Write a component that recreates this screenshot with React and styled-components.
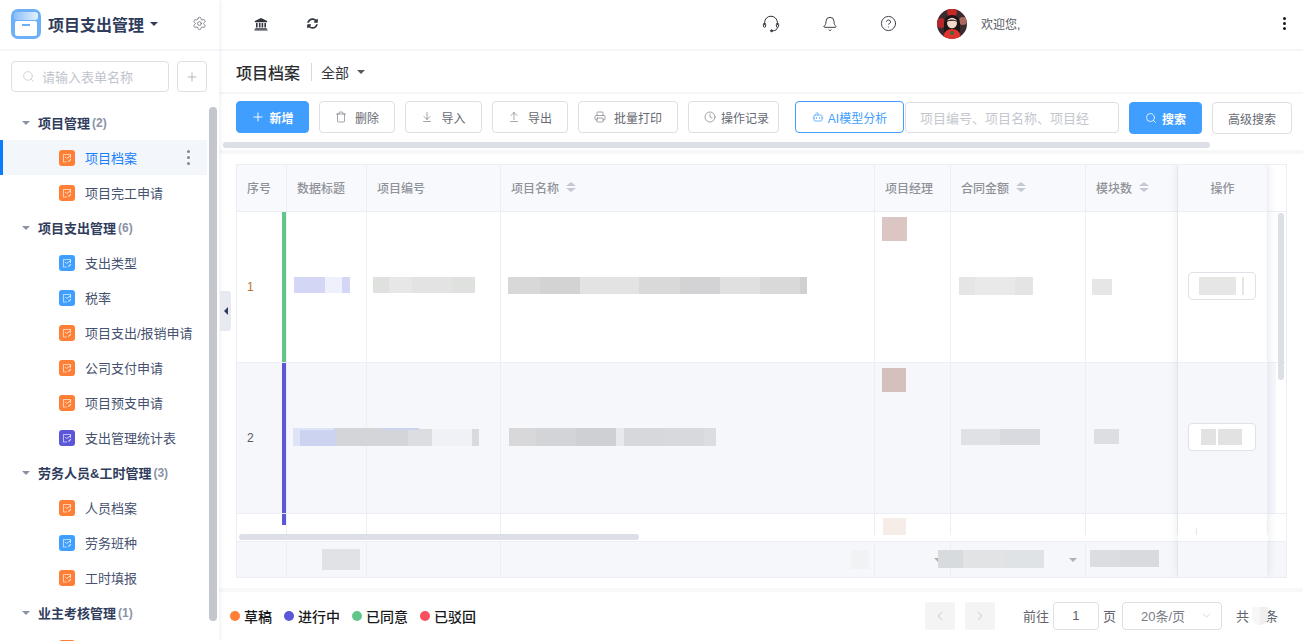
import React from 'react';
import styled, { createGlobalStyle } from 'styled-components';
import {
  ArrowDownToLine,
  ArrowUpFromLine,
  Bell,
  Bot,
  ChevronDown,
  ChevronLeft,
  ChevronRight,
  CircleHelp,
  Clock,
  Plus,
  Printer,
  Search,
  Settings,
  Trash,
} from 'lucide-react';
import { FaSyncAlt } from 'react-icons/fa';

const ORANGE = '#ff7f36';
const BLUE = '#409eff';
const PURPLE = '#5b57d8';
const GREEN = '#62c68a';
const RED = '#f9505d';
const LINE = '#ebeef5';
const STRIPE = '#f5f7fb';

const groups = [
  {
    name: '项目管理',
    count: 2,
    items: [
      { name: '项目档案', color: ORANGE, active: true },
      { name: '项目完工申请', color: ORANGE },
    ],
  },
  {
    name: '项目支出管理',
    count: 6,
    items: [
      { name: '支出类型', color: BLUE },
      { name: '税率', color: BLUE },
      { name: '项目支出/报销申请', color: ORANGE },
      { name: '公司支付申请', color: ORANGE },
      { name: '项目预支申请', color: ORANGE },
      { name: '支出管理统计表', color: PURPLE },
    ],
  },
  {
    name: '劳务人员&工时管理',
    count: 3,
    items: [
      { name: '人员档案', color: ORANGE },
      { name: '劳务班种', color: BLUE },
      { name: '工时填报', color: ORANGE },
    ],
  },
  {
    name: '业主考核管理',
    count: 1,
    // only the top of this icon is on screen, its label is below the fold
    items: [{ name: '', color: ORANGE }],
  },
];

const GlobalStyle = createGlobalStyle`
  html, body {
    margin: 0;
    padding: 0;
    background: #fff;
  }
  body {
    font-family: "Liberation Sans", "Noto Sans CJK SC", sans-serif;
    overflow: hidden;
  }
  * {
    box-sizing: border-box;
  }
`;

const Page = styled.div`
  display: flex;
  width: 1303px;
  height: 641px;
  overflow: hidden;
  position: relative;
`;

const Sidebar = styled.aside`
  position: relative;
  z-index: 3;
  width: 219px;
  flex: none;
  height: 100%;
  background: #fff;
  box-shadow: 2px 0 4px rgba(40, 50, 80, 0.06);
  display: flex;
  flex-direction: column;
  overflow: hidden;
`;

const BrandBar = styled.div`
  height: 51px;
  flex: none;
  border-bottom: 2px solid #f5f6fa;
  display: flex;
  align-items: center;
  padding: 0 12px 2px 11px;
`;

const BrandTitle = styled.div`
  margin-left: 7px;
  font-size: 16px;
  font-weight: 700;
  color: #2f3c5c;
  white-space: nowrap;
`;

const Caret = styled.i`
  display: inline-block;
  flex: none;
  width: 0;
  height: 0;
  border-left: ${(p) => p.$size || 4}px solid transparent;
  border-right: ${(p) => p.$size || 4}px solid transparent;
  border-top: ${(p) => p.$size || 4}px solid ${(p) => p.$color || '#2f3c5c'};
  margin-left: ${(p) => p.$left || 0}px;
`;

const GearSlot = styled.span`
  margin-left: auto;
  display: flex;
  color: #5f646e;
`;

const SearchRow = styled.div`
  flex: none;
  display: flex;
  gap: 8px;
  padding: 10px 12px 13px 11px;
`;

const FormSearch = styled.div`
  width: 158px;
  height: 31px;
  border: 1px solid #dcdfe6;
  border-radius: 4px;
  display: flex;
  align-items: center;
  gap: 7px;
  padding-left: 10px;
  font-size: 13px;
  color: #c0c4cc;
`;

const SquareButton = styled.div`
  width: 30px;
  height: 31px;
  border: 1px solid #dcdfe6;
  border-radius: 4px;
  display: flex;
  align-items: center;
  justify-content: center;
  color: #9a9ea6;
`;

const MenuList = styled.div`
  flex: 1;
  min-height: 0;
  overflow: hidden;
`;

const GroupRow = styled.div`
  height: 35px;
  width: 207px;
  display: flex;
  align-items: center;
  padding-left: 22px;
  font-size: 13px;
  font-weight: 700;
  color: #2f3c5c;
  white-space: nowrap;
`;

const GroupName = styled.span`
  margin-left: 8px;
`;

const GroupCount = styled.span`
  margin-left: 2px;
  font-size: 12px;
  color: #8b93a7;
`;

const MenuItem = styled.div`
  height: 35px;
  width: 207px;
  display: flex;
  align-items: center;
  padding-left: ${(p) => (p.$active ? 56 : 59)}px;
  font-size: 13px;
  white-space: nowrap;
  color: ${(p) => (p.$active ? '#1a7ffb' : '#46526f')};
  background: ${(p) => (p.$active ? '#f3f6fb' : 'transparent')};
  border-left: ${(p) => (p.$active ? '3px solid #0b7cfb' : 'none')};
`;

const MenuIconBox = styled.span`
  width: 16px;
  height: 16px;
  flex: none;
  border-radius: 3px;
  background: ${(p) => p.$color};
  margin-right: 10px;
  display: flex;
`;

const Kebab = styled.span`
  display: flex;
  flex-direction: column;
  gap: ${(p) => p.$gap}px;
  margin-left: auto;
  margin-right: ${(p) => p.$right}px;

  i {
    display: block;
    width: 3px;
    height: 3px;
    border-radius: 50%;
    background: ${(p) => p.$color};
  }
`;

const SideThumb = styled.div`
  position: absolute;
  left: 209px;
  top: 107px;
  width: 8px;
  height: 514px;
  border-radius: 4px;
  background: #c3c6cc;
`;

const CollapseHandle = styled.div`
  position: absolute;
  z-index: 4;
  left: 220px;
  top: 291px;
  width: 11px;
  height: 40px;
  border-radius: 0 3px 3px 0;
  background: #e8eaf1;
  display: flex;
  align-items: center;
  justify-content: center;
`;

const HandleArrow = styled.i`
  width: 0;
  height: 0;
  border-top: 4px solid transparent;
  border-bottom: 4px solid transparent;
  border-right: 4px solid #2f3c5c;
`;

const Main = styled.main`
  flex: 1;
  min-width: 0;
  display: flex;
  flex-direction: column;
`;

const TopBar = styled.header`
  height: 51px;
  flex: none;
  border-bottom: 2px solid #f5f6fa;
  display: flex;
  align-items: center;
  padding: 0 17px 2px 35px;
`;

const TopIcon = styled.span`
  display: flex;
  align-items: center;
  justify-content: center;
  color: #30343c;
`;

const TopLeft = styled.div`
  display: flex;
  align-items: center;
  gap: 39px;
`;

const TopRight = styled.div`
  margin-left: 444px;
  display: flex;
  align-items: center;
  gap: 42px;
`;

const UserBox = styled.div`
  display: flex;
  align-items: center;
  gap: 14px;
  margin-left: -2px;
  font-size: 12px;
  color: #555a63;
`;

const TitleRow = styled.div`
  height: 43px;
  flex: none;
  border-bottom: 2px solid #f5f6fa;
  display: flex;
  align-items: center;
  padding-left: 17px;
`;

const PageTitle = styled.h1`
  margin: 0;
  font-size: 16px;
  font-weight: 500;
  color: #2b2d31;
`;

const TitleDivider = styled.span`
  width: 1px;
  height: 18px;
  background: #d6d9e0;
  margin: 0 9px 0 11px;
`;

const FilterLabel = styled.span`
  font-size: 14px;
  color: #34373d;
  margin-right: 8px;
`;

const Toolbar = styled.div`
  height: 48px;
  flex: none;
  display: flex;
  align-items: flex-start;
  padding: 7px 0 0 17px;
`;

const ToolButton = styled.button`
  flex: none;
  width: ${(p) => p.$w}px;
  height: 32px;
  margin: ${(p) => (p.$low ? '1px' : '0')} ${(p) => p.$gap ?? 10}px 0 0;
  padding: 0 0 0 ${(p) => p.$shift || 0}px;
  border-radius: 4px;
  border: 1px solid ${(p) => (p.$primary || p.$accent ? BLUE : '#dcdfe6')};
  background: ${(p) => (p.$primary ? BLUE : '#fff')};
  color: ${(p) => (p.$primary ? '#fff' : p.$accent ? BLUE : '#666a72')};
  font: inherit;
  font-size: 12px;
  font-weight: ${(p) => (p.$primary ? 700 : 400)};
  display: flex;
  align-items: center;
  justify-content: center;
  gap: ${(p) => p.$space ?? 8}px;
  white-space: nowrap;
`;

const KeywordInput = styled.div`
  flex: none;
  width: 214px;
  height: 31px;
  margin: 1px 10px 0 1px;
  border: 1px solid #dcdfe6;
  border-radius: 4px;
  display: flex;
  align-items: center;
  padding-left: 14px;
  font-size: 13px;
  color: #c4c7ce;
  white-space: nowrap;
  overflow: hidden;
`;

const ToolbarTrack = styled.div`
  flex: none;
  height: 8px;
  padding-left: 4px;
`;

const ToolbarThumb = styled.div`
  width: 987px;
  height: 6px;
  border-radius: 3px;
  background: #dcdfe6;
`;

const Band = styled.div`
  flex: none;
  height: 4px;
  background: #f7f8fa;
`;

const TableArea = styled.section`
  flex: none;
  padding: 10px 0 10px 17px;
`;

const Table = styled.div`
  position: relative;
  width: 1051px;
  height: 414px;
  border: 1px solid ${LINE};
  display: flex;
  flex-direction: column;
  overflow: hidden;
`;

const Row = styled.div`
  flex: none;
  display: grid;
  grid-template-columns: 50px 80px 134px 374px 76px 135px 92px 90px 18px;
  height: ${(p) => p.$h}px;
  background: ${(p) => p.$bg || '#fff'};
  border-bottom: ${(p) => (p.$line ? `1px solid ${LINE}` : 'none')};
  border-top: ${(p) => (p.$top ? `1px solid ${LINE}` : 'none')};
`;

const Cell = styled.div`
  min-width: 0;
  display: flex;
  align-items: center;
  padding-left: ${(p) => p.$pad || 0}px;
  border-right: 1px solid ${LINE};
  background: ${(p) => p.$bg || 'transparent'};
  position: relative;
`;

const HeadCell = styled(Cell)`
  justify-content: ${(p) => (p.$center ? 'center' : 'flex-start')};
  padding-left: ${(p) => (p.$center ? 0 : 10)}px;
  padding-bottom: 2px;
  font-size: 12px;
  font-weight: 500;
  color: #8f9299;
  white-space: nowrap;
`;

const Sort = styled.span`
  display: flex;
  flex-direction: column;
  gap: 2px;
  margin-left: 7px;

  i {
    width: 0;
    height: 0;
    border-left: 5px solid transparent;
    border-right: 5px solid transparent;
  }
  i:first-child {
    border-bottom: 4px solid #c4c8d3;
  }
  i:last-child {
    border-top: 4px solid #c4c8d3;
  }
`;

const GutterCell = styled.div`
  background: ${(p) => (p.$stripe ? `linear-gradient(90deg, ${STRIPE} 8px, #fff 8px)` : '#fff')};
`;

const RowNumber = styled.span`
  font-size: 12px;
  color: ${(p) => p.$color};
  flex: 1;
`;

const StatusBar = styled.span`
  flex: none;
  width: 4px;
  align-self: ${(p) => (p.$short ? 'flex-start' : 'stretch')};
  height: ${(p) => (p.$short ? '11px' : 'auto')};
  background: ${(p) => p.$color};
`;

const Mosaic = styled.div`
  flex: none;
  display: flex;
  height: ${(p) => p.$h}px;
  margin-bottom: ${(p) => p.$up || 0}px;
  align-self: ${(p) => (p.$top !== undefined ? 'flex-start' : 'center')};
  margin-top: ${(p) => p.$top || 0}px;
  position: relative;
  z-index: 1;

  ${(p) =>
    p.$sliver &&
    `&::before {
      content: '';
      position: absolute;
      left: 0;
      top: -1px;
      width: 126px;
      height: 2px;
      background: linear-gradient(90deg, #dfe3f7 41px, #d4d5d9 41px, #d4d5d9 88px, #cbd3f1 88px);
    }`}
`;

const Chip = styled.span`
  display: block;
  flex: none;
  height: 100%;
  width: ${(p) => p.$w}px;
  background: ${(p) => p.$c};
`;

const OpButton = styled.div`
  flex: none;
  width: 68px;
  height: 28px;
  border: 1px solid #dfe2e9;
  border-radius: 4px;
  background: #fff;
  display: flex;
  align-items: center;
  padding-left: ${(p) => p.$pad}px;
  gap: ${(p) => p.$gap}px;
  margin-bottom: ${(p) => p.$up}px;
`;

const Tick = styled.span`
  align-self: flex-end;
  width: 1px;
  height: 7px;
  margin-left: 18px;
  background: #e6e6e6;
`;

const Body = styled.div`
  flex: none;
  height: 329px;
  overflow: hidden;
`;

const FilterTriangle = styled(Caret)`
  margin-top: 1px;
`;

const FixedShadow = styled.div`
  position: absolute;
  z-index: 2;
  top: 0;
  bottom: 0;
  left: 941px;
  width: 90px;
  box-shadow: 0 0 9px rgba(60, 70, 100, 0.12);
  pointer-events: none;
`;

const HScrollThumb = styled.div`
  position: absolute;
  z-index: 3;
  left: 2px;
  bottom: 37px;
  width: 400px;
  height: 6px;
  border-radius: 3px;
  background: #dcdfe6;
`;

const VScrollThumb = styled.div`
  position: absolute;
  z-index: 3;
  right: 2px;
  top: 48px;
  width: 6px;
  height: 167px;
  border-radius: 3px;
  background: #dcdfe6;
`;

const Footer = styled.footer`
  flex: 1;
  min-height: 0;
  display: flex;
  align-items: center;
  padding: 0 25px 2px 11px;
`;

const Legend = styled.div`
  display: flex;
  align-items: center;
  gap: 12px;
`;

const LegendItem = styled.span`
  display: flex;
  align-items: center;
  gap: 4px;
  font-size: 14px;
  font-weight: 500;
  color: #17181a;
`;

const LegendDot = styled.i`
  width: 10px;
  height: 10px;
  border-radius: 50%;
  background: ${(p) => p.$color};
`;

const Pager = styled.nav`
  margin-left: auto;
  display: flex;
  align-items: center;
  font-size: 13px;
  color: #5f636b;
`;

const PagerArrow = styled.span`
  width: 30px;
  height: 28px;
  border-radius: 2px;
  background: #f4f4f5;
  margin-right: ${(p) => p.$right}px;
  display: flex;
  align-items: center;
  justify-content: center;
  color: #c0c4cc;
`;

const PageInput = styled.span`
  width: 46px;
  height: 28px;
  margin: 0 4px;
  border: 1px solid #dcdfe6;
  border-radius: 4px;
  display: flex;
  align-items: center;
  justify-content: center;
  color: #606266;
`;

const SizeSelect = styled.span`
  width: 100px;
  height: 28px;
  margin: 0 14px 0 6px;
  border: 1px solid #dcdfe6;
  border-radius: 4px;
  display: flex;
  align-items: center;
  padding: 0 8px 0 18px;
  justify-content: space-between;
  color: #7a7e86;

  svg {
    color: #c0c4cc;
  }
`;

const TotalMask = styled.span`
  position: relative;
  width: 16px;
  height: 18px;
  margin: 1px -3px 0 3px;
  border-radius: 2px 2px 10px 10px;
  background: linear-gradient(90deg, #f7f7f7 50%, #eeeeee 50%);
`;

const BrandLogo = () => (
  <svg width="30" height="30" viewBox="0 0 30 30">
    <defs>
      <linearGradient id="logoTop" x1="0" x2="1" y1="0" y2="0">
        <stop offset="0" stopColor="#8cc0f9" />
        <stop offset="1" stopColor="#e4f0fd" />
      </linearGradient>
    </defs>
    <rect width="30" height="30" rx="7" fill="#6cb0f7" />
    <rect x="3" y="3" width="24" height="8" rx="3" fill="url(#logoTop)" />
    <rect x="4" y="12" width="22" height="15" rx="2" fill="#fff" />
    <rect x="11" y="15" width="8" height="2" fill="#6cb0f7" />
  </svg>
);

const FormIcon = () => (
  <svg width="16" height="16" viewBox="0 0 16 16" fill="none">
    <path d="M11.5 8V4.5h-7v7.5H8" stroke="#fff" strokeOpacity="0.6" strokeWidth="1.1" />
    <path d="M6.2 7l1.5 1.5L12 5.4" stroke="#fff" strokeOpacity="0.75" strokeWidth="1" />
    <path d="M9.3 11.6l2.6-2.4" stroke="#fff" strokeOpacity="0.75" strokeWidth="1.2" />
  </svg>
);

const BankIcon = () => (
  <svg width="14" height="14" viewBox="0 0 14 14" fill="#30343c">
    <path d="M7 1L.8 4v1.2h12.4V4z" />
    <path d="M2 6h1.6v4.6H2zM4.9 6h1.6v4.6H4.9zM7.6 6h1.6v4.6H7.6zM10.4 6H12v4.6h-1.6z" />
    <path d="M1.2 11.2h11.6v1H1.2zM.4 12.6h13.2v1H.4z" />
  </svg>
);

const HeadsetIcon = () => (
  <svg width="18" height="18" viewBox="0 0 18 18" fill="none" stroke="#30343c" strokeWidth="1">
    <path d="M2.6 10V7.6a6.4 6.4 0 0 1 12.8 0V10" />
    <rect x="1.4" y="8.2" width="2.2" height="4" rx="1.1" />
    <rect x="14.4" y="8.2" width="2.2" height="4" rx="1.1" />
    <path d="M15.4 12.2c0 2.4-2 3.6-4.6 3.6" />
    <circle cx="9.6" cy="15.8" r="1" fill="#30343c" />
  </svg>
);

const Avatar = () => (
  <svg width="30" height="30" viewBox="0 0 30 30">
    <defs>
      <clipPath id="avatarClip">
        <circle cx="15" cy="15" r="15" />
      </clipPath>
    </defs>
    <g clipPath="url(#avatarClip)">
      <rect width="30" height="30" fill="#3c2b2c" />
      <circle cx="4" cy="14" r="5" fill="#b5282a" />
      <circle cx="26" cy="12" r="4" fill="#a86a60" />
      <circle cx="15" cy="3" r="5" fill="#c72a26" />
      <path d="M7 14a8 8 0 0 1 16 0v9H7z" fill="#1d1517" />
      <ellipse cx="15" cy="14" rx="5" ry="5.2" fill="#f3d9cb" />
      <path d="M9.6 13c1.5-3.5 9-3.5 10.8 0-3-1.6-7.6-1.6-10.8 0z" fill="#1d1517" />
      <path d="M6 31c0-8 4-11 9-11s9 3 9 11z" fill="#e0352c" />
      <circle cx="15" cy="24" r="2" fill="#3c6a42" />
    </g>
  </svg>
);

const Blocks = ({ chips, ...rest }) => (
  <Mosaic {...rest}>
    {chips.map(([w, c], i) => (
      <Chip key={i} $w={w} $c={c} />
    ))}
  </Mosaic>
);

const SortIcon = () => (
  <Sort>
    <i />
    <i />
  </Sort>
);

const KebabDots = ({ color, gap, right }) => (
  <Kebab $color={color} $gap={gap} $right={right}>
    <i />
    <i />
    <i />
  </Kebab>
);

const App = () => {
  return (
    <Page>
      <GlobalStyle />
      <Sidebar>
        <BrandBar>
          <BrandLogo />
          <BrandTitle>项目支出管理</BrandTitle>
          <Caret $left={6} />
          <GearSlot>
            <Settings size={15} strokeWidth={1.2} />
          </GearSlot>
        </BrandBar>
        <SearchRow>
          <FormSearch>
            <Search size={13} strokeWidth={1.3} />
            请输入表单名称
          </FormSearch>
          <SquareButton>
            <Plus size={14} strokeWidth={1.2} />
          </SquareButton>
        </SearchRow>
        <MenuList>
          {groups.map((group) => (
            <React.Fragment key={group.name}>
              <GroupRow>
                <Caret $color="#8a92a6" />
                <GroupName>{group.name}</GroupName>
                <GroupCount>({group.count})</GroupCount>
              </GroupRow>
              {group.items.map((item, i) => (
                <MenuItem key={i} $active={item.active}>
                  <MenuIconBox $color={item.color}>
                    <FormIcon />
                  </MenuIconBox>
                  {item.name}
                  {item.active && <KebabDots color="#7f8899" gap={3} right={17} />}
                </MenuItem>
              ))}
            </React.Fragment>
          ))}
        </MenuList>
        <SideThumb />
      </Sidebar>
      <CollapseHandle>
        <HandleArrow />
      </CollapseHandle>

      <Main>
        <TopBar>
          <TopLeft>
            <TopIcon>
              <BankIcon />
            </TopIcon>
            <TopIcon>
              <FaSyncAlt size={11} />
            </TopIcon>
          </TopLeft>
          <TopRight>
            <TopIcon>
              <HeadsetIcon />
            </TopIcon>
            <TopIcon>
              <Bell size={16} strokeWidth={1.4} />
            </TopIcon>
            <TopIcon>
              <CircleHelp size={17} strokeWidth={1.3} />
            </TopIcon>
            <UserBox>
              <Avatar />
              欢迎您,
            </UserBox>
          </TopRight>
          <KebabDots color="#1a1a1a" gap={2} right={0} />
        </TopBar>

        <TitleRow>
          <PageTitle>项目档案</PageTitle>
          <TitleDivider />
          <FilterLabel>全部</FilterLabel>
          <Caret $color="#55585f" />
        </TitleRow>

        <Toolbar>
          <ToolButton $w={73} $primary $space={4}>
            <Plus size={14} strokeWidth={1.6} />
            新增
          </ToolButton>
          <ToolButton $w={76}>
            <Trash size={12} strokeWidth={1.2} />
            删除
          </ToolButton>
          <ToolButton $w={77}>
            <ArrowDownToLine size={12} strokeWidth={1.2} />
            导入
          </ToolButton>
          <ToolButton $w={76}>
            <ArrowUpFromLine size={12} strokeWidth={1.2} />
            导出
          </ToolButton>
          <ToolButton $w={100}>
            <Printer size={12} strokeWidth={1.2} />
            批量打印
          </ToolButton>
          <ToolButton $w={91} $gap={16} $space={5} $shift={6}>
            <Clock size={12} strokeWidth={1.2} />
            操作记录
          </ToolButton>
          <ToolButton $w={109} $accent $gap={0} $space={4}>
            <Bot size={12} strokeWidth={1.4} />
            AI模型分析
          </ToolButton>
          <KeywordInput>项目编号、项目名称、项目经</KeywordInput>
          <ToolButton $w={73} $primary $low $space={5} $gap={10}>
            <Search size={12} strokeWidth={1.6} />
            搜索
          </ToolButton>
          <ToolButton $w={80} $low $gap={0}>
            高级搜索
          </ToolButton>
        </Toolbar>
        <ToolbarTrack>
          <ToolbarThumb />
        </ToolbarTrack>
        <Band />

        <TableArea>
          <Table>
            <Row $h={47} $bg="#f8f9fc" $line>
              <HeadCell>序号</HeadCell>
              <HeadCell>数据标题</HeadCell>
              <HeadCell>项目编号</HeadCell>
              <HeadCell>
                项目名称
                <SortIcon />
              </HeadCell>
              <HeadCell>项目经理</HeadCell>
              <HeadCell>
                合同金额
                <SortIcon />
              </HeadCell>
              <HeadCell>
                模块数
                <SortIcon />
              </HeadCell>
              <HeadCell $center>操作</HeadCell>
              <GutterCell />
            </Row>

            <Body>
              <Row $h={151} $line>
                <Cell $pad={10}>
                  <RowNumber $color="#b8742f">1</RowNumber>
                  <StatusBar $color={GREEN} />
                </Cell>
                <Cell $pad={7}>
                  <Blocks $h={16} $up={4} chips={[[31, '#d3d7f5'], [17, '#eef0fb'], [8, '#d3d7f5']]} />
                </Cell>
                <Cell $pad={6}>
                  <Blocks $h={16} $up={4} chips={[[16, '#dfe1df'], [23, '#e6e7e6'], [40, '#e2e3e2'], [23, '#dfe1df']]} />
                </Cell>
                <Cell $pad={7}>
                  <Blocks
                    $h={17}
                    $up={3}
                    chips={[
                      [32, '#d8d8d8'],
                      [40, '#d3d3d3'],
                      [59, '#e3e3e3'],
                      [41, '#d9d9d9'],
                      [40, '#d3d3d5'],
                      [40, '#dfe0df'],
                      [40, '#d9d9da'],
                      [7, '#d0d0d0'],
                    ]}
                  />
                </Cell>
                <Cell $pad={7}>
                  <Blocks $h={24} $top={5} chips={[[25, '#dbc6c4']]} />
                </Cell>
                <Cell $pad={8}>
                  <Blocks $h={18} $up={3} chips={[[16, '#e5e5e5'], [40, '#e9e9e9'], [18, '#e4e4e4']]} />
                </Cell>
                <Cell $pad={6}>
                  <Blocks $h={16} $up={1} chips={[[20, '#e6e6e6']]} />
                </Cell>
                <Cell $pad={10}>
                  <OpButton $pad={10} $gap={6} $up={3}>
                    <Blocks $h={18} chips={[[37, '#e6e6e6']]} />
                    <Blocks $h={18} chips={[[2, '#e6e6e6']]} />
                  </OpButton>
                </Cell>
                <GutterCell />
              </Row>

              <Row $h={151} $bg={STRIPE} $line>
                <Cell $pad={10}>
                  <RowNumber $color="#555a63">2</RowNumber>
                  <StatusBar $color={PURPLE} />
                </Cell>
                <Cell $pad={6}>
                  <Blocks
                    $h={17}
                    $up={2}
                    $sliver
                    chips={[
                      [7, '#dfe3f7'],
                      [36, '#cbd3f1'],
                      [72, '#d4d5d9'],
                      [24, '#dcdde0'],
                      [40, '#eff1f6'],
                      [7, '#d9dadd'],
                    ]}
                  />
                </Cell>
                <Cell />
                <Cell $pad={8}>
                  <Blocks
                    $h={18}
                    $up={2}
                    chips={[
                      [27, '#d8d8da'],
                      [40, '#d3d4d7'],
                      [40, '#cfd0d3'],
                      [8, '#e8e9ec'],
                      [40, '#d7d8db'],
                      [40, '#d8d9dc'],
                      [12, '#dcdde0'],
                    ]}
                  />
                </Cell>
                <Cell $pad={7}>
                  <Blocks $h={24} $top={5} chips={[[24, '#d5c0be']]} />
                </Cell>
                <Cell $pad={10}>
                  <Blocks $h={16} $up={2} chips={[[39, '#e0e1e5'], [40, '#d9dadf']]} />
                </Cell>
                <Cell $pad={8}>
                  <Blocks $h={15} $up={3} chips={[[25, '#dddee2']]} />
                </Cell>
                <Cell $pad={10}>
                  <OpButton $pad={12} $gap={2} $up={3}>
                    <Blocks $h={16} chips={[[15, '#e2e2e2']]} />
                    <Blocks $h={16} chips={[[24, '#e2e2e2']]} />
                  </OpButton>
                </Cell>
                <GutterCell $stripe />
              </Row>

              <Row $h={18}>
                <Cell $pad={10}>
                  <RowNumber />
                  <StatusBar $color={PURPLE} $short />
                </Cell>
                <Cell />
                <Cell />
                <Cell />
                <Cell $pad={8}>
                  <Blocks $h={17} $top={4} chips={[[23, '#f6ede8']]} />
                </Cell>
                <Cell />
                <Cell />
                <Cell>
                  <Tick />
                </Cell>
                <GutterCell />
              </Row>
            </Body>

            <Row $h={36} $bg={STRIPE} $top>
              <Cell />
              <Cell $pad={35}>
                <Blocks $h={21} chips={[[38, '#e1e2e5']]} />
              </Cell>
              <Cell />
              <Cell $pad={350}>
                <Blocks $h={19} chips={[[18, '#f1f2f4']]} />
              </Cell>
              <Cell $pad={59}>
                <FilterTriangle $color="#b8b0a8" />
                <Blocks
                  $h={18}
                  $up={2}
                  style={{ marginLeft: -4 }}
                  chips={[[25, '#d8dbdd'], [42, '#e1e3e5'], [39, '#e0e3e6']]}
                />
              </Cell>
              <Cell $pad={118}>
                <FilterTriangle $color="#b5b2ae" />
              </Cell>
              <Cell $pad={4}>
                <Blocks $h={17} $up={2} chips={[[30, '#dcdde0'], [39, '#d9dade']]} />
              </Cell>
              <Cell />
              <div />
            </Row>

            <FixedShadow />
            <HScrollThumb />
            <VScrollThumb />
          </Table>
        </TableArea>
        <Band />

        <Footer>
          <Legend>
            <LegendItem>
              <LegendDot $color={ORANGE} />
              草稿
            </LegendItem>
            <LegendItem>
              <LegendDot $color={PURPLE} />
              进行中
            </LegendItem>
            <LegendItem>
              <LegendDot $color={GREEN} />
              已同意
            </LegendItem>
            <LegendItem>
              <LegendDot $color={RED} />
              已驳回
            </LegendItem>
          </Legend>
          <Pager>
            <PagerArrow $right={10}>
              <ChevronLeft size={14} strokeWidth={1.6} />
            </PagerArrow>
            <PagerArrow $right={28}>
              <ChevronRight size={14} strokeWidth={1.6} />
            </PagerArrow>
            前往
            <PageInput>1</PageInput>
            页
            <SizeSelect>
              20条/页
              <ChevronDown size={13} strokeWidth={1.2} />
            </SizeSelect>
            共
            <TotalMask />
            条
          </Pager>
        </Footer>
      </Main>
    </Page>
  );
};

export default App;
